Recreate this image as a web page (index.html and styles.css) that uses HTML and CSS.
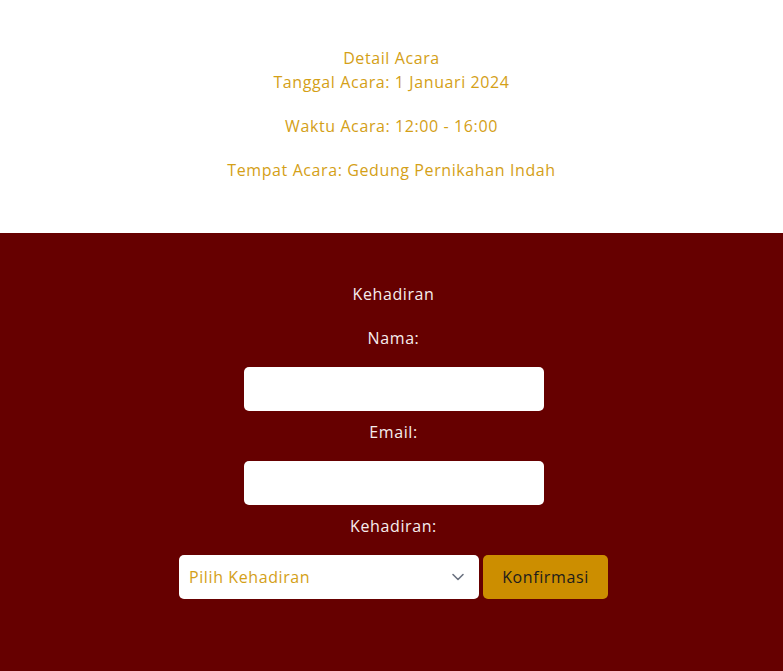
FILE: index.html
```html
<!DOCTYPE html>
<html lang="id">
<head>
<meta charset="utf-8">
<title>Detail Acara</title>
<link rel="stylesheet" href="styles.css">
</head>
<body>
<section class="detail">
  <h2 class="detail-title">Detail Acara</h2>
  <p class="detail-line">Tanggal Acara: 1 Januari 2024</p>
  <p class="detail-line">Waktu Acara: 12:00 - 16:00</p>
  <p class="detail-line">Tempat Acara: Gedung Pernikahan Indah</p>
</section>
<section class="rsvp">
  <h2 class="rsvp-title">Kehadiran</h2>
  <form class="rsvp-form">
    <label class="label label-first" for="nama">Nama:</label>
    <input class="field" id="nama" type="text">
    <label class="label" for="email">Email:</label>
    <input class="field" id="email" type="email">
    <label class="label" for="hadir">Kehadiran:</label>
    <div class="row">
      <span class="select-wrap">
        <select class="select" id="hadir">
          <option>Pilih Kehadiran</option>
          <option>Hadir</option>
          <option>Tidak Hadir</option>
        </select>
        <svg class="chevron" width="14" height="14" viewBox="0 0 14 14"><path d="M2 4.5 L7 9.5 L12 4.5" fill="none" stroke="#6b7280" stroke-width="1.6" stroke-linecap="round" stroke-linejoin="round"/></svg>
      </span>
      <button class="btn" type="button">Konfirmasi</button>
    </div>
  </form>
</section>
</body>
</html>
```
FILE: styles.css
```css
* { box-sizing: border-box; }
html, body { margin: 0; padding: 0; }
body {
  font-family: "Open Sans", "Noto Sans", sans-serif;
  font-size: 16px;
  line-height: 24px;
  letter-spacing: 0.6px;
  background: #660000;
}
.detail {
  background: #ffffff;
  height: 233px;
  padding-top: 46px;
  text-align: center;
  color: #d4a017;
}
.detail-title {
  font-size: 16px;
  font-weight: 400;
  margin: 0;
  line-height: 24px;
}
.detail-line {
  margin: 0 0 20px;
}
.rsvp {
  background: #660000;
  padding-top: 49px;
  height: 438px;
  text-align: center;
  color: #f6eded;
}
.rsvp-title {
  font-size: 16px;
  font-weight: 400;
  line-height: 24px;
  margin: 0 0 20px;
  padding-left: 4px;
}
.rsvp-form {
  display: flex;
  flex-direction: column;
  align-items: center;
}
.label {
  display: block;
  line-height: 24px;
  margin: 0 0 17px;
  padding-left: 4px;
}
.field {
  width: 300px;
  height: 44px;
  border: none;
  border-radius: 5px;
  background: #ffffff;
  margin: 0 0 9px 5px;
  padding: 0 10px;
  font: inherit;
}
.row {
  display: flex;
  gap: 4px;
  padding-left: 4px;
}
.select-wrap {
  position: relative;
  display: block;
}
.select {
  appearance: none;
  -webkit-appearance: none;
  width: 300px;
  height: 44px;
  border: none;
  border-radius: 5px;
  background: #ffffff;
  color: #d4a017;
  font: inherit;
  letter-spacing: 0.6px;
  padding: 0 10px;
}
.chevron {
  position: absolute;
  right: 14px;
  top: 15px;
}
.btn {
  width: 125px;
  height: 44px;
  border: none;
  border-radius: 5px;
  background: #cc8e00;
  color: #1c1c1c;
  font: inherit;
  letter-spacing: 0.6px;
}
```
